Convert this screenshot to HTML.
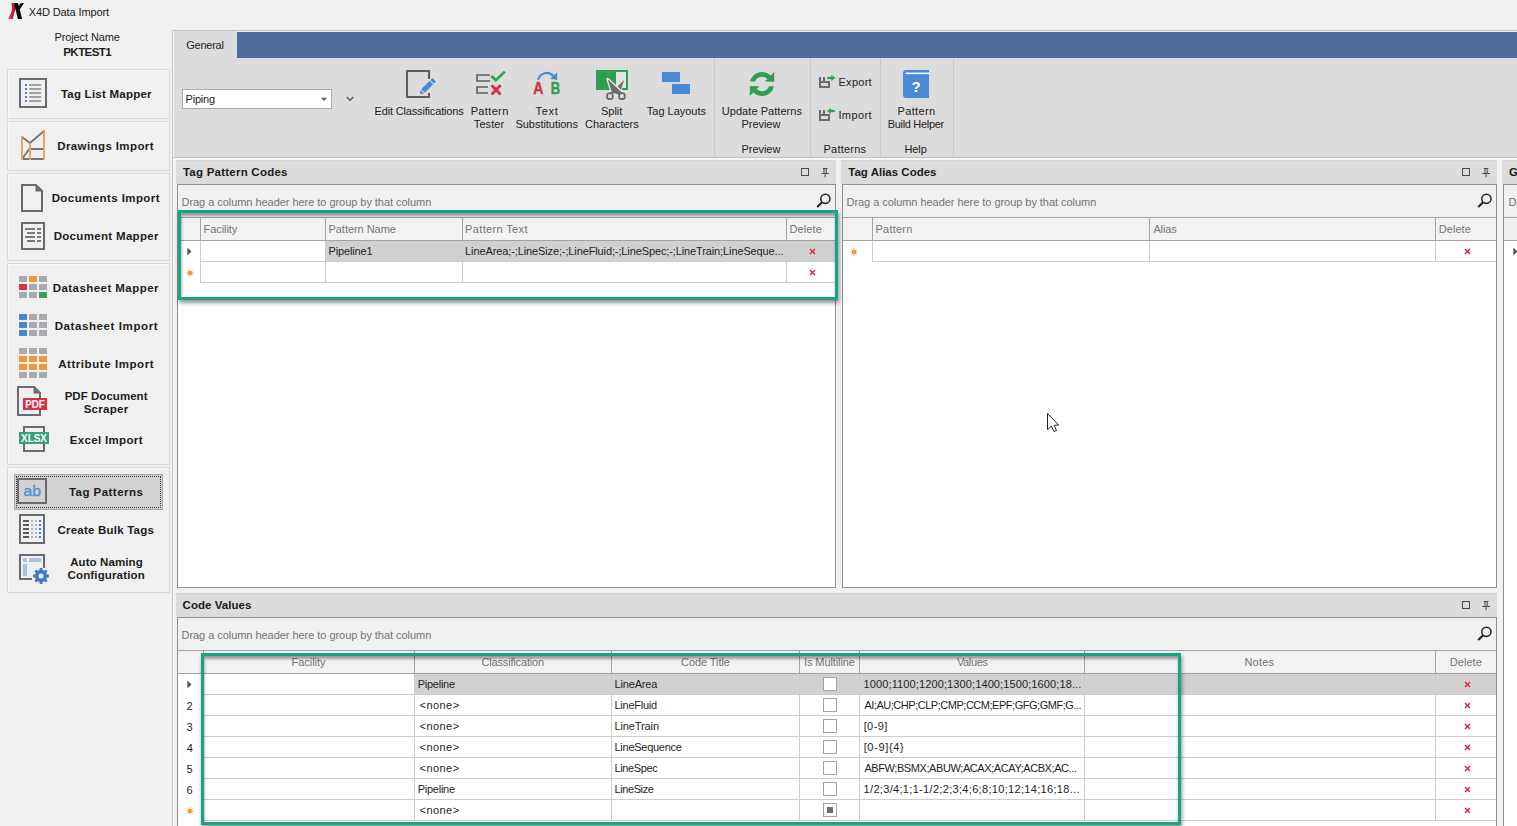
<!DOCTYPE html>
<html><head><meta charset="utf-8"><title>X4D Data Import</title>
<style>
html,body{margin:0;padding:0;}
body{width:1517px;height:826px;overflow:hidden;background:#f0f0f0;position:relative;font-family:"Liberation Sans",sans-serif;font-size:11px;color:#1e1e1e;}
.a{position:absolute;box-sizing:border-box;display:block;}
.t{position:absolute;white-space:nowrap;line-height:14px;height:14px;}
</style></head><body>
<span class="t" style="left:28.75px;top:4.79px;color:#1a1a1a;font-size:11px;letter-spacing:-0.114px;">X4D Data Import</span>
<span class="t" style="left:54.50px;top:30.19px;color:#1e1e1e;font-size:11px;letter-spacing:-0.114px;">Project Name</span>
<span class="t" style="left:63.25px;top:45.02px;color:#1e1e1e;font-size:11.5px;font-weight:bold;letter-spacing:-0.550px;">PKTEST1</span>
<div class="a " style="left:7px;top:69px;width:163px;height:50px;border:1px solid #d8d8d8;box-shadow:inset 1px 1px 0 #f8f8f8;"></div>
<div class="a " style="left:7px;top:121px;width:163px;height:50px;border:1px solid #d8d8d8;box-shadow:inset 1px 1px 0 #f8f8f8;"></div>
<div class="a " style="left:7px;top:173px;width:163px;height:88px;border:1px solid #d8d8d8;box-shadow:inset 1px 1px 0 #f8f8f8;"></div>
<div class="a " style="left:7px;top:263px;width:163px;height:202px;border:1px solid #d8d8d8;box-shadow:inset 1px 1px 0 #f8f8f8;"></div>
<div class="a " style="left:7px;top:467px;width:163px;height:126px;border:1px solid #d8d8d8;box-shadow:inset 1px 1px 0 #f8f8f8;"></div>
<div class="a " style="left:14px;top:474px;width:149px;height:36px;background:#d2d2d2;border:1px solid #a8a8a8;"></div>
<div class="a " style="left:16px;top:476px;width:145px;height:32px;border:1px dotted #3a3a3a;"></div>
<span class="t" style="left:60.90px;top:87.02px;color:#1c1c1c;font-size:11.5px;font-weight:bold;letter-spacing:0.236px;">Tag List Mapper</span>
<span class="t" style="left:57.25px;top:139.02px;color:#1c1c1c;font-size:11.5px;font-weight:bold;letter-spacing:0.396px;">Drawings Import</span>
<span class="t" style="left:51.65px;top:191.02px;color:#1c1c1c;font-size:11.5px;font-weight:bold;letter-spacing:0.420px;">Documents Import</span>
<span class="t" style="left:53.65px;top:229.02px;color:#1c1c1c;font-size:11.5px;font-weight:bold;letter-spacing:0.325px;">Document Mapper</span>
<span class="t" style="left:52.65px;top:281.02px;color:#1c1c1c;font-size:11.5px;font-weight:bold;letter-spacing:0.453px;">Datasheet Mapper</span>
<span class="t" style="left:54.65px;top:319.02px;color:#1c1c1c;font-size:11.5px;font-weight:bold;letter-spacing:0.597px;">Datasheet Import</span>
<span class="t" style="left:58.15px;top:357.02px;color:#1c1c1c;font-size:11.5px;font-weight:bold;letter-spacing:0.567px;">Attribute Import</span>
<span class="t" style="left:64.65px;top:389.02px;color:#1c1c1c;font-size:11.5px;font-weight:bold;letter-spacing:0.041px;">PDF Document</span>
<span class="t" style="left:83.70px;top:402.02px;color:#1c1c1c;font-size:11.5px;font-weight:bold;letter-spacing:0.267px;">Scraper</span>
<span class="t" style="left:69.65px;top:433.02px;color:#1c1c1c;font-size:11.5px;font-weight:bold;letter-spacing:0.350px;">Excel Import</span>
<span class="t" style="left:68.90px;top:485.02px;color:#1c1c1c;font-size:11.5px;font-weight:bold;letter-spacing:0.468px;">Tag Patterns</span>
<span class="t" style="left:57.55px;top:523.02px;color:#1c1c1c;font-size:11.5px;font-weight:bold;letter-spacing:0.213px;">Create Bulk Tags</span>
<span class="t" style="left:70.15px;top:555.02px;color:#1c1c1c;font-size:11.5px;font-weight:bold;letter-spacing:0.100px;">Auto Naming</span>
<span class="t" style="left:67.55px;top:568.02px;color:#1c1c1c;font-size:11.5px;font-weight:bold;letter-spacing:0.146px;">Configuration</span>
<div class="a " style="left:172px;top:30px;width:1px;height:796px;background:#c6c6c6;"></div>
<div class="a " style="left:173px;top:31px;width:1px;height:795px;background:#f6f6f6;"></div>
<div class="a " style="left:172px;top:30px;width:1345px;height:1px;background:#c6c6c6;"></div>
<div class="a " style="left:174px;top:31px;width:1343px;height:126px;background:#dcdcdc;"></div>
<div class="a " style="left:237px;top:32px;width:1280px;height:26px;background:#4d6b9d;"></div>
<div class="a " style="left:237px;top:31px;width:1280px;height:1px;background:#eeeeee;"></div>
<div class="a " style="left:173px;top:157px;width:1344px;height:1px;background:#c2c2c2;"></div>
<div class="a " style="left:173px;top:158px;width:1344px;height:1px;background:#f6f6f6;"></div>
<div class="a " style="left:173px;top:159px;width:1344px;height:1px;background:#f6f6f6;"></div>
<span class="t" style="left:186.25px;top:37.79px;color:#1e1e1e;font-size:11px;letter-spacing:-0.250px;">General</span>
<div class="a " style="left:714px;top:58px;width:1px;height:99px;background:#c9c9c9;"></div>
<div class="a " style="left:810px;top:58px;width:1px;height:99px;background:#c9c9c9;"></div>
<div class="a " style="left:880px;top:58px;width:1px;height:99px;background:#c9c9c9;"></div>
<div class="a " style="left:953px;top:58px;width:1px;height:99px;background:#c9c9c9;"></div>
<div class="a " style="left:182px;top:89px;width:150px;height:20px;background:#ffffff;border:1px solid #ababab;"></div>
<span class="t" style="left:185.50px;top:92.19px;color:#1e1e1e;font-size:11px;letter-spacing:-0.200px;">Piping</span>
<svg class="a" style="left:320px;top:97px;" width="8" height="5" viewBox="0 0 8 5"><path d="M0.8 0.8h6.4l-3.2 3.3z" fill="#626262"/></svg>
<svg class="a" style="left:346px;top:96px;" width="8" height="6" viewBox="0 0 8 6"><path d="M0.7 1l3.3 3.3l3.3-3.3" fill="none" stroke="#555" stroke-width="1.3"/></svg>
<span class="t" style="left:374.50px;top:104.19px;color:#222;font-size:11px;letter-spacing:-0.161px;">Edit Classifications</span>
<span class="t" style="left:470.70px;top:104.19px;color:#222;font-size:11px;letter-spacing:0.350px;">Pattern</span>
<span class="t" style="left:473.80px;top:117.19px;color:#222;font-size:11px;letter-spacing:0.080px;">Tester</span>
<span class="t" style="left:535.40px;top:104.19px;color:#222;font-size:11px;letter-spacing:0.767px;">Text</span>
<span class="t" style="left:515.50px;top:117.19px;color:#222;font-size:11px;letter-spacing:-0.046px;">Substitutions</span>
<span class="t" style="left:601.10px;top:104.19px;color:#222;font-size:11px;letter-spacing:-0.062px;">Split</span>
<span class="t" style="left:585.05px;top:117.19px;color:#222;font-size:11px;letter-spacing:-0.011px;">Characters</span>
<span class="t" style="left:646.80px;top:104.19px;color:#222;font-size:11px;letter-spacing:-0.015px;">Tag Layouts</span>
<span class="t" style="left:721.80px;top:104.19px;color:#222;font-size:11px;letter-spacing:0.046px;">Update Patterns</span>
<span class="t" style="left:741.50px;top:117.19px;color:#222;font-size:11px;letter-spacing:-0.050px;">Preview</span>
<span class="t" style="left:741.50px;top:142.19px;color:#222;font-size:11px;letter-spacing:-0.050px;">Preview</span>
<span class="t" style="left:838.50px;top:75.19px;color:#222;font-size:11px;letter-spacing:0.270px;">Export</span>
<span class="t" style="left:838.40px;top:108.19px;color:#222;font-size:11px;letter-spacing:0.420px;">Import</span>
<span class="t" style="left:823.50px;top:142.19px;color:#222;font-size:11px;letter-spacing:0.214px;">Patterns</span>
<span class="t" style="left:897.50px;top:104.19px;color:#222;font-size:11px;letter-spacing:0.350px;">Pattern</span>
<span class="t" style="left:887.70px;top:117.19px;color:#222;font-size:11px;letter-spacing:-0.314px;">Build Helper</span>
<span class="t" style="left:904.50px;top:142.19px;color:#222;font-size:11px;letter-spacing:-0.100px;">Help</span>
<div class="a " style="left:176px;top:160px;width:660px;height:24px;background:#dcdcdc;border-top:1px solid #d3d3d3;"></div>
<span class="t" style="left:182.90px;top:164.62px;color:#1a1a1a;font-size:11.5px;font-weight:bold;letter-spacing:0.237px;">Tag Pattern Codes</span>
<div class="a " style="left:177px;top:184px;width:659px;height:404px;background:#ffffff;border:1px solid #8f8f8f;"></div>
<div class="a " style="left:178px;top:185px;width:657px;height:32px;background:#f0f0f0;"></div>
<span class="t" style="left:181.50px;top:194.59px;color:#747474;font-size:11px;letter-spacing:-0.045px;">Drag a column header here to group by that column</span>
<svg class="a" style="left:801px;top:168px;" width="8" height="8" viewBox="0 0 8 8"><rect x="0.5" y="0.5" width="7" height="7" fill="none" stroke="#4a4a4a" stroke-width="1"/></svg>
<svg class="a" style="left:821px;top:168px;" width="8" height="10" viewBox="0 0 8 10"><path d="M1.8 0.5h4.6M3 0.5V5M5.2 0.5V5M0.3 5.5h7.6M4.1 5.5v3.8" fill="none" stroke="#4a4a4a" stroke-width="1"/></svg>
<svg class="a" style="left:816px;top:193px;" width="16" height="16" viewBox="0 0 16 16"><circle cx="9.4" cy="5.8" r="4.6" fill="none" stroke="#222" stroke-width="1.5"/><path d="M6.2 9.2L1.2 14" stroke="#222" stroke-width="2.1"/></svg>
<div class="a " style="left:178px;top:217px;width:657px;height:1px;background:#a3a3a3;"></div>
<div class="a " style="left:178px;top:218px;width:657px;height:22px;background:#f2f2f2;"></div>
<div class="a " style="left:178px;top:240px;width:657px;height:1px;background:#a3a3a3;"></div>
<div class="a " style="left:326px;top:241px;width:509px;height:20px;background:#d1d1d1;"></div>
<div class="a " style="left:200px;top:261px;width:635px;height:1px;background:#cdcdcd;"></div>
<div class="a " style="left:200px;top:282px;width:635px;height:1px;background:#cdcdcd;"></div>
<div class="a " style="left:200px;top:218px;width:1px;height:22px;background:#a3a3a3;"></div>
<div class="a " style="left:200px;top:241px;width:1px;height:42px;background:#cdcdcd;"></div>
<div class="a " style="left:325px;top:218px;width:1px;height:22px;background:#a3a3a3;"></div>
<div class="a " style="left:325px;top:241px;width:1px;height:42px;background:#cdcdcd;"></div>
<div class="a " style="left:462px;top:218px;width:1px;height:22px;background:#a3a3a3;"></div>
<div class="a " style="left:462px;top:241px;width:1px;height:42px;background:#cdcdcd;"></div>
<div class="a " style="left:786px;top:218px;width:1px;height:22px;background:#a3a3a3;"></div>
<div class="a " style="left:786px;top:241px;width:1px;height:42px;background:#cdcdcd;"></div>
<span class="t" style="left:203.50px;top:222.19px;color:#757575;font-size:11px;letter-spacing:-0.050px;">Facility</span>
<span class="t" style="left:328.50px;top:222.19px;color:#757575;font-size:11px;letter-spacing:-0.045px;">Pattern Name</span>
<span class="t" style="left:465.10px;top:222.19px;color:#757575;font-size:11px;letter-spacing:0.350px;">Pattern Text</span>
<span class="t" style="left:789.50px;top:222.19px;color:#757575;font-size:11px;letter-spacing:0.110px;">Delete</span>
<span class="t" style="left:328.50px;top:244.19px;color:#1e1e1e;font-size:11px;letter-spacing:-0.156px;">Pipeline1</span>
<span class="t" style="left:465.10px;top:244.19px;color:#1e1e1e;font-size:11px;letter-spacing:-0.116px;">LineArea;-;LineSize;-;LineFluid;-;LineSpec;-;LineTrain;LineSeque...</span>
<svg class="a" style="left:187px;top:247px;" width="5" height="9" viewBox="0 0 5 9"><path d="M0.3 0.5L4.5 4.5L0.3 8.5z" fill="#555"/></svg>
<svg class="a" style="left:185.5px;top:268.5px;" width="8" height="8" viewBox="0 0 8 8"><g stroke="#f0943c" stroke-width="0.9"><path d="M4 0.3V7.7M0.3 4H7.7M1.4 1.4L6.6 6.6M6.6 1.4L1.4 6.6"/></g><circle cx="4" cy="4" r="2" fill="#f0943c"/></svg>
<svg class="a" style="left:808.8px;top:248.0px;" width="7" height="7" viewBox="0 0 7 7"><path d="M1 1L6 6M6 1L1 6" stroke="#d32a41" stroke-width="1.5" fill="none"/></svg>
<svg class="a" style="left:808.8px;top:269.0px;" width="7" height="7" viewBox="0 0 7 7"><path d="M1 1L6 6M6 1L1 6" stroke="#d32a41" stroke-width="1.5" fill="none"/></svg>
<div class="a " style="left:841px;top:160px;width:656px;height:24px;background:#dcdcdc;border-top:1px solid #d3d3d3;"></div>
<span class="t" style="left:848.30px;top:164.62px;color:#1a1a1a;font-size:11.5px;font-weight:bold;">Tag Alias Codes</span>
<div class="a " style="left:842px;top:184px;width:655px;height:404px;background:#ffffff;border:1px solid #8f8f8f;"></div>
<div class="a " style="left:843px;top:185px;width:653px;height:32px;background:#f0f0f0;"></div>
<span class="t" style="left:846.50px;top:194.59px;color:#747474;font-size:11px;letter-spacing:-0.045px;">Drag a column header here to group by that column</span>
<svg class="a" style="left:1462px;top:168px;" width="8" height="8" viewBox="0 0 8 8"><rect x="0.5" y="0.5" width="7" height="7" fill="none" stroke="#4a4a4a" stroke-width="1"/></svg>
<svg class="a" style="left:1482px;top:168px;" width="8" height="10" viewBox="0 0 8 10"><path d="M1.8 0.5h4.6M3 0.5V5M5.2 0.5V5M0.3 5.5h7.6M4.1 5.5v3.8" fill="none" stroke="#4a4a4a" stroke-width="1"/></svg>
<svg class="a" style="left:1477px;top:193px;" width="16" height="16" viewBox="0 0 16 16"><circle cx="9.4" cy="5.8" r="4.6" fill="none" stroke="#222" stroke-width="1.5"/><path d="M6.2 9.2L1.2 14" stroke="#222" stroke-width="2.1"/></svg>
<div class="a " style="left:843px;top:217px;width:653px;height:1px;background:#a3a3a3;"></div>
<div class="a " style="left:843px;top:218px;width:653px;height:22px;background:#f2f2f2;"></div>
<div class="a " style="left:843px;top:240px;width:653px;height:1px;background:#a3a3a3;"></div>
<div class="a " style="left:872px;top:261px;width:624px;height:1px;background:#cdcdcd;"></div>
<div class="a " style="left:872px;top:218px;width:1px;height:22px;background:#a3a3a3;"></div>
<div class="a " style="left:872px;top:241px;width:1px;height:21px;background:#cdcdcd;"></div>
<div class="a " style="left:1149px;top:218px;width:1px;height:22px;background:#a3a3a3;"></div>
<div class="a " style="left:1149px;top:241px;width:1px;height:21px;background:#cdcdcd;"></div>
<div class="a " style="left:1435px;top:218px;width:1px;height:22px;background:#a3a3a3;"></div>
<div class="a " style="left:1435px;top:241px;width:1px;height:21px;background:#cdcdcd;"></div>
<span class="t" style="left:875.50px;top:222.19px;color:#757575;font-size:11px;letter-spacing:0.217px;">Pattern</span>
<span class="t" style="left:1153.40px;top:222.19px;color:#757575;font-size:11px;letter-spacing:-0.125px;">Alias</span>
<span class="t" style="left:1438.70px;top:222.19px;color:#757575;font-size:11px;letter-spacing:0.070px;">Delete</span>
<svg class="a" style="left:850px;top:247.5px;" width="8" height="8" viewBox="0 0 8 8"><g stroke="#f0943c" stroke-width="0.9"><path d="M4 0.3V7.7M0.3 4H7.7M1.4 1.4L6.6 6.6M6.6 1.4L1.4 6.6"/></g><circle cx="4" cy="4" r="2" fill="#f0943c"/></svg>
<svg class="a" style="left:1463.8px;top:248.0px;" width="7" height="7" viewBox="0 0 7 7"><path d="M1 1L6 6M6 1L1 6" stroke="#d32a41" stroke-width="1.5" fill="none"/></svg>
<div class="a " style="left:1502px;top:160px;width:20px;height:24px;background:#dcdcdc;border-top:1px solid #d3d3d3;"></div>
<span class="t" style="left:1509.05px;top:164.62px;color:#1a1a1a;font-size:11.5px;font-weight:bold;">G</span>
<div class="a " style="left:1503px;top:184px;width:20px;height:700px;background:#ffffff;border:1px solid #8f8f8f;"></div>
<div class="a " style="left:1504px;top:185px;width:20px;height:32px;background:#f0f0f0;"></div>
<span class="t" style="left:1508.50px;top:194.59px;color:#747474;font-size:11px;">Dr</span>
<div class="a " style="left:1504px;top:217px;width:13px;height:1px;background:#a3a3a3;"></div>
<div class="a " style="left:1504px;top:218px;width:13px;height:22px;background:#efefef;"></div>
<div class="a " style="left:1504px;top:240px;width:13px;height:1px;background:#a3a3a3;"></div>
<svg class="a" style="left:1513px;top:247px;" width="5" height="9" viewBox="0 0 5 9"><path d="M0.3 0.5L4.5 4.5L0.3 8.5z" fill="#555"/></svg>
<div class="a " style="left:1497px;top:160px;width:5px;height:666px;background:#f3f3f3;"></div>
<div class="a " style="left:176px;top:593px;width:1321px;height:24px;background:#dcdcdc;border-top:1px solid #d3d3d3;"></div>
<span class="t" style="left:182.55px;top:597.62px;color:#1a1a1a;font-size:11.5px;font-weight:bold;letter-spacing:0.050px;">Code Values</span>
<div class="a " style="left:177px;top:617px;width:1320px;height:223px;background:#ffffff;border:1px solid #8f8f8f;"></div>
<div class="a " style="left:178px;top:618px;width:1318px;height:32px;background:#f0f0f0;"></div>
<span class="t" style="left:181.50px;top:627.59px;color:#747474;font-size:11px;letter-spacing:-0.045px;">Drag a column header here to group by that column</span>
<svg class="a" style="left:1462px;top:601px;" width="8" height="8" viewBox="0 0 8 8"><rect x="0.5" y="0.5" width="7" height="7" fill="none" stroke="#4a4a4a" stroke-width="1"/></svg>
<svg class="a" style="left:1482px;top:601px;" width="8" height="10" viewBox="0 0 8 10"><path d="M1.8 0.5h4.6M3 0.5V5M5.2 0.5V5M0.3 5.5h7.6M4.1 5.5v3.8" fill="none" stroke="#4a4a4a" stroke-width="1"/></svg>
<svg class="a" style="left:1477px;top:626px;" width="16" height="16" viewBox="0 0 16 16"><circle cx="9.4" cy="5.8" r="4.6" fill="none" stroke="#222" stroke-width="1.5"/><path d="M6.2 9.2L1.2 14" stroke="#222" stroke-width="2.1"/></svg>
<div class="a " style="left:178px;top:650px;width:1318px;height:1px;background:#a3a3a3;"></div>
<div class="a " style="left:178px;top:651px;width:1318px;height:22px;background:#f2f2f2;"></div>
<div class="a " style="left:178px;top:673px;width:1318px;height:1px;background:#a3a3a3;"></div>
<div class="a " style="left:415px;top:674px;width:1081px;height:20px;background:#d1d1d1;"></div>
<div class="a " style="left:203px;top:694px;width:1293px;height:1px;background:#cdcdcd;"></div>
<div class="a " style="left:203px;top:715px;width:1293px;height:1px;background:#cdcdcd;"></div>
<div class="a " style="left:203px;top:736px;width:1293px;height:1px;background:#cdcdcd;"></div>
<div class="a " style="left:203px;top:757px;width:1293px;height:1px;background:#cdcdcd;"></div>
<div class="a " style="left:203px;top:778px;width:1293px;height:1px;background:#cdcdcd;"></div>
<div class="a " style="left:203px;top:799px;width:1293px;height:1px;background:#cdcdcd;"></div>
<div class="a " style="left:203px;top:820px;width:1293px;height:1px;background:#cdcdcd;"></div>
<div class="a " style="left:203px;top:651px;width:1px;height:22px;background:#a3a3a3;"></div>
<div class="a " style="left:203px;top:674px;width:1px;height:147px;background:#cdcdcd;"></div>
<div class="a " style="left:414px;top:651px;width:1px;height:22px;background:#a3a3a3;"></div>
<div class="a " style="left:414px;top:674px;width:1px;height:147px;background:#cdcdcd;"></div>
<div class="a " style="left:611px;top:651px;width:1px;height:22px;background:#a3a3a3;"></div>
<div class="a " style="left:611px;top:674px;width:1px;height:147px;background:#cdcdcd;"></div>
<div class="a " style="left:799px;top:651px;width:1px;height:22px;background:#a3a3a3;"></div>
<div class="a " style="left:799px;top:674px;width:1px;height:147px;background:#cdcdcd;"></div>
<div class="a " style="left:859px;top:651px;width:1px;height:22px;background:#a3a3a3;"></div>
<div class="a " style="left:859px;top:674px;width:1px;height:147px;background:#cdcdcd;"></div>
<div class="a " style="left:1084px;top:651px;width:1px;height:22px;background:#a3a3a3;"></div>
<div class="a " style="left:1084px;top:674px;width:1px;height:147px;background:#cdcdcd;"></div>
<div class="a " style="left:1435px;top:651px;width:1px;height:22px;background:#a3a3a3;"></div>
<div class="a " style="left:1435px;top:674px;width:1px;height:147px;background:#cdcdcd;"></div>
<span class="t" style="left:291.50px;top:655.19px;color:#757575;font-size:11px;letter-spacing:-0.021px;">Facility</span>
<span class="t" style="left:481.45px;top:655.19px;color:#757575;font-size:11px;letter-spacing:-0.162px;">Classification</span>
<span class="t" style="left:681.05px;top:655.19px;color:#757575;font-size:11px;letter-spacing:-0.078px;">Code Title</span>
<span class="t" style="left:804.00px;top:655.19px;color:#757575;font-size:11px;letter-spacing:-0.100px;">Is Multiline</span>
<span class="t" style="left:956.95px;top:655.19px;color:#757575;font-size:11px;letter-spacing:-0.360px;">Values</span>
<span class="t" style="left:1244.50px;top:655.19px;color:#757575;font-size:11px;letter-spacing:0.175px;">Notes</span>
<span class="t" style="left:1449.70px;top:655.19px;color:#757575;font-size:11px;letter-spacing:0.070px;">Delete</span>
<span class="t" style="left:417.70px;top:677.19px;color:#1e1e1e;font-size:11px;letter-spacing:-0.250px;">Pipeline</span>
<span class="t" style="left:614.50px;top:677.19px;color:#1e1e1e;font-size:11px;letter-spacing:-0.164px;">LineArea</span>
<span class="t" style="left:863.60px;top:677.19px;color:#1e1e1e;font-size:11px;letter-spacing:0.114px;">1000;1100;1200;1300;1400;1500;1600;18...</span>
<div class="a " style="left:823px;top:677px;width:14px;height:14px;background:#ffffff;border:1px solid #a4a4a4;"></div>
<svg class="a" style="left:1463.8px;top:681.0px;" width="7" height="7" viewBox="0 0 7 7"><path d="M1 1L6 6M6 1L1 6" stroke="#d32a41" stroke-width="1.5" fill="none"/></svg>
<span class="t" style="left:419.50px;top:698.19px;color:#1e1e1e;font-size:11px;letter-spacing:0.460px;">&lt;none&gt;</span>
<span class="t" style="left:614.50px;top:698.19px;color:#1e1e1e;font-size:11px;letter-spacing:-0.256px;">LineFluid</span>
<span class="t" style="left:864.40px;top:698.19px;color:#1e1e1e;font-size:11px;letter-spacing:-0.474px;">AI;AU;CHP;CLP;CMP;CCM;EPF;GFG;GMF;G...</span>
<div class="a " style="left:823px;top:698px;width:14px;height:14px;background:#ffffff;border:1px solid #a4a4a4;"></div>
<svg class="a" style="left:1463.8px;top:702.0px;" width="7" height="7" viewBox="0 0 7 7"><path d="M1 1L6 6M6 1L1 6" stroke="#d32a41" stroke-width="1.5" fill="none"/></svg>
<span class="t" style="left:186.45px;top:698.99px;color:#222;font-size:11px;">2</span>
<span class="t" style="left:419.50px;top:719.19px;color:#1e1e1e;font-size:11px;letter-spacing:0.460px;">&lt;none&gt;</span>
<span class="t" style="left:614.50px;top:719.19px;color:#1e1e1e;font-size:11px;letter-spacing:-0.112px;">LineTrain</span>
<span class="t" style="left:863.65px;top:719.19px;color:#1e1e1e;font-size:11px;letter-spacing:0.425px;">[0-9]</span>
<div class="a " style="left:823px;top:719px;width:14px;height:14px;background:#ffffff;border:1px solid #a4a4a4;"></div>
<svg class="a" style="left:1463.8px;top:723.0px;" width="7" height="7" viewBox="0 0 7 7"><path d="M1 1L6 6M6 1L1 6" stroke="#d32a41" stroke-width="1.5" fill="none"/></svg>
<span class="t" style="left:186.60px;top:719.99px;color:#222;font-size:11px;">3</span>
<span class="t" style="left:419.50px;top:740.19px;color:#1e1e1e;font-size:11px;letter-spacing:0.460px;">&lt;none&gt;</span>
<span class="t" style="left:614.50px;top:740.19px;color:#1e1e1e;font-size:11px;letter-spacing:-0.268px;">LineSequence</span>
<span class="t" style="left:863.65px;top:740.19px;color:#1e1e1e;font-size:11px;letter-spacing:0.664px;">[0-9]{4}</span>
<div class="a " style="left:823px;top:740px;width:14px;height:14px;background:#ffffff;border:1px solid #a4a4a4;"></div>
<svg class="a" style="left:1463.8px;top:744.0px;" width="7" height="7" viewBox="0 0 7 7"><path d="M1 1L6 6M6 1L1 6" stroke="#d32a41" stroke-width="1.5" fill="none"/></svg>
<span class="t" style="left:186.75px;top:740.99px;color:#222;font-size:11px;">4</span>
<span class="t" style="left:419.50px;top:761.19px;color:#1e1e1e;font-size:11px;letter-spacing:0.460px;">&lt;none&gt;</span>
<span class="t" style="left:614.50px;top:761.19px;color:#1e1e1e;font-size:11px;letter-spacing:-0.357px;">LineSpec</span>
<span class="t" style="left:864.40px;top:761.19px;color:#1e1e1e;font-size:11px;letter-spacing:-0.415px;">ABFW;BSMX;ABUW;ACAX;ACAY;ACBX;AC...</span>
<div class="a " style="left:823px;top:761px;width:14px;height:14px;background:#ffffff;border:1px solid #a4a4a4;"></div>
<svg class="a" style="left:1463.8px;top:765.0px;" width="7" height="7" viewBox="0 0 7 7"><path d="M1 1L6 6M6 1L1 6" stroke="#d32a41" stroke-width="1.5" fill="none"/></svg>
<span class="t" style="left:186.60px;top:761.99px;color:#222;font-size:11px;">5</span>
<span class="t" style="left:417.70px;top:782.19px;color:#1e1e1e;font-size:11px;letter-spacing:-0.250px;">Pipeline</span>
<span class="t" style="left:614.50px;top:782.19px;color:#1e1e1e;font-size:11px;letter-spacing:-0.407px;">LineSize</span>
<span class="t" style="left:863.60px;top:782.19px;color:#1e1e1e;font-size:11px;letter-spacing:0.321px;">1/2;3/4;1;1-1/2;2;3;4;6;8;10;12;14;16;18...</span>
<div class="a " style="left:823px;top:782px;width:14px;height:14px;background:#ffffff;border:1px solid #a4a4a4;"></div>
<svg class="a" style="left:1463.8px;top:786.0px;" width="7" height="7" viewBox="0 0 7 7"><path d="M1 1L6 6M6 1L1 6" stroke="#d32a41" stroke-width="1.5" fill="none"/></svg>
<span class="t" style="left:186.45px;top:782.99px;color:#222;font-size:11px;">6</span>
<span class="t" style="left:419.50px;top:803.19px;color:#1e1e1e;font-size:11px;letter-spacing:0.460px;">&lt;none&gt;</span>
<div class="a " style="left:823px;top:803px;width:14px;height:14px;background:#ffffff;border:1px solid #a4a4a4;"></div>
<div class="a " style="left:827px;top:807px;width:6px;height:6px;background:#6e6e6e;"></div>
<svg class="a" style="left:1463.8px;top:807.0px;" width="7" height="7" viewBox="0 0 7 7"><path d="M1 1L6 6M6 1L1 6" stroke="#d32a41" stroke-width="1.5" fill="none"/></svg>
<svg class="a" style="left:187px;top:680px;" width="5" height="9" viewBox="0 0 5 9"><path d="M0.3 0.5L4.5 4.5L0.3 8.5z" fill="#555"/></svg>
<svg class="a" style="left:185.5px;top:806.5px;" width="8" height="8" viewBox="0 0 8 8"><g stroke="#f0943c" stroke-width="0.9"><path d="M4 0.3V7.7M0.3 4H7.7M1.4 1.4L6.6 6.6M6.6 1.4L1.4 6.6"/></g><circle cx="4" cy="4" r="2" fill="#f0943c"/></svg>
<svg class="a" style="left:7px;top:2px;" width="18" height="18" viewBox="0 0 18 18"><defs><linearGradient id="xr" x1="0" y1="0" x2="1" y2="0"><stop offset="0" stop-color="#e0607a"/><stop offset="0.5" stop-color="#c8203c"/><stop offset="1" stop-color="#8a1024"/></linearGradient></defs>
<path d="M4.2 1.2L8.6 1.2C9.2 4 9 7 7.6 9.8L5.8 17L1 17L4.6 9.6C5.4 7 5.2 4 4.2 1.2z" fill="url(#xr)"/>
<path d="M7 1L11 1L15.2 17L10.8 17z" fill="#0a0a0a"/>
<path d="M13.6 1L17 1L11.4 9.4L10 6.4z" fill="#0a0a0a"/></svg>
<svg class="a" style="left:19px;top:78px;" width="28" height="30" viewBox="0 0 28 30"><rect x="1" y="1" width="26" height="28" fill="none" stroke="#6a6a6f" stroke-width="2"/><rect x="6" y="6" width="2" height="2" fill="#4a80c4"/><rect x="10" y="6" width="12" height="2" fill="#a2a2a6"/><rect x="6" y="10" width="2" height="2" fill="#4a80c4"/><rect x="10" y="10" width="12" height="2" fill="#a2a2a6"/><rect x="6" y="14" width="2" height="2" fill="#4a80c4"/><rect x="10" y="14" width="12" height="2" fill="#a2a2a6"/><rect x="6" y="18" width="2" height="2" fill="#4a80c4"/><rect x="10" y="18" width="12" height="2" fill="#a2a2a6"/><rect x="6" y="22" width="2" height="2" fill="#4a80c4"/><rect x="10" y="22" width="12" height="2" fill="#a2a2a6"/></svg>
<svg class="a" style="left:21px;top:130px;" width="24" height="30" viewBox="0 0 24 30"><g fill="none" stroke="#77777b" stroke-width="2"><path d="M1 7L9 13L23 1M9 18L1 29M9 19H23M1 29H23"/></g>
<g fill="none" stroke="#e8a466" stroke-width="2"><path d="M1 6V30M9 13V30M23 0V30"/></g></svg>
<svg class="a" style="left:21px;top:184px;" width="22" height="28" viewBox="0 0 22 28"><path d="M1 1H15L21 7V27H1z" fill="none" stroke="#6a6a6f" stroke-width="2"/><path d="M14.5 1.5V7.5H20.8z" fill="#6a6a6f"/></svg>
<svg class="a" style="left:21px;top:222px;" width="24" height="28" viewBox="0 0 24 28"><rect x="1" y="1" width="22" height="26" fill="none" stroke="#6a6a6f" stroke-width="2"/><rect x="4" y="6" width="10" height="2" fill="#7a7a7e"/><rect x="16" y="6" width="4" height="2" fill="#7a7a7e"/><rect x="6" y="10" width="8" height="2" fill="#7a7a7e"/><rect x="16" y="10" width="4" height="2" fill="#7a7a7e"/><rect x="4" y="14" width="10" height="2" fill="#7a7a7e"/><rect x="16" y="14" width="4" height="2" fill="#7a7a7e"/><rect x="6" y="18" width="8" height="2" fill="#7a7a7e"/><rect x="16" y="18" width="4" height="2" fill="#7a7a7e"/></svg>
<svg class="a" style="left:19px;top:276px;" width="28" height="22" viewBox="0 0 28 22"><rect x="0" y="0" width="8" height="6" fill="#a9a9ae"/><rect x="10" y="0" width="8" height="6" fill="#f0993c"/><rect x="20" y="0" width="8" height="6" fill="#a9a9ae"/><rect x="0" y="8" width="8" height="6" fill="#d8304a"/><rect x="10" y="8" width="8" height="6" fill="#a9a9ae"/><rect x="20" y="8" width="8" height="6" fill="#a9a9ae"/><rect x="0" y="16" width="8" height="6" fill="#a9a9ae"/><rect x="10" y="16" width="8" height="6" fill="#a9a9ae"/><rect x="20" y="16" width="8" height="6" fill="#3aa356"/></svg>
<svg class="a" style="left:19px;top:314px;" width="28" height="22" viewBox="0 0 28 22"><rect x="0" y="0" width="8" height="6" fill="#4685d0"/><rect x="10" y="0" width="8" height="6" fill="#a9a9ae"/><rect x="20" y="0" width="8" height="6" fill="#a9a9ae"/><rect x="0" y="8" width="8" height="6" fill="#4685d0"/><rect x="10" y="8" width="8" height="6" fill="#a9a9ae"/><rect x="20" y="8" width="8" height="6" fill="#a9a9ae"/><rect x="0" y="16" width="8" height="6" fill="#4685d0"/><rect x="10" y="16" width="8" height="6" fill="#a9a9ae"/><rect x="20" y="16" width="8" height="6" fill="#a9a9ae"/></svg>
<svg class="a" style="left:19px;top:348px;" width="28" height="30" viewBox="0 0 28 30"><rect x="0" y="0" width="8" height="6" fill="#a9a9ae"/><rect x="10" y="0" width="8" height="6" fill="#a9a9ae"/><rect x="20" y="0" width="8" height="6" fill="#a9a9ae"/><rect x="0" y="8" width="8" height="6" fill="#f0993c"/><rect x="10" y="8" width="8" height="6" fill="#f0993c"/><rect x="20" y="8" width="8" height="6" fill="#f0993c"/><rect x="0" y="16" width="8" height="6" fill="#f0993c"/><rect x="10" y="16" width="8" height="6" fill="#f0993c"/><rect x="20" y="16" width="8" height="6" fill="#f0993c"/><rect x="0" y="24" width="8" height="6" fill="#a9a9ae"/><rect x="10" y="24" width="8" height="6" fill="#a9a9ae"/><rect x="20" y="24" width="8" height="6" fill="#a9a9ae"/></svg>
<svg class="a" style="left:17px;top:386px;" width="30" height="30" viewBox="0 0 30 30"><path d="M1 1H17L23 7V29H1z" fill="none" stroke="#6a6a6f" stroke-width="2"/><path d="M16.5 1.5V7.5H22.8z" fill="#6a6a6f"/>
<rect x="6" y="12" width="24" height="12" fill="#d8304a"/>
<text x="18" y="22.1" font-family="Liberation Sans, sans-serif" font-weight="bold" font-size="11.4" fill="#fff" text-anchor="middle" textLength="19.5" lengthAdjust="spacingAndGlyphs">PDF</text></svg>
<svg class="a" style="left:19px;top:426px;" width="30" height="26" viewBox="0 0 30 26"><rect x="5" y="1" width="20" height="24" fill="none" stroke="#6a6a6f" stroke-width="2"/>
<rect x="0" y="6" width="30" height="12" fill="#3a9f7a"/>
<text x="15" y="16" font-family="Liberation Sans, sans-serif" font-weight="bold" font-size="11" fill="#fff" text-anchor="middle" textLength="26" lengthAdjust="spacingAndGlyphs">XLSX</text></svg>
<svg class="a" style="left:17px;top:478px;" width="30" height="26" viewBox="0 0 30 26"><rect x="1" y="1" width="28" height="24" fill="none" stroke="#6a6a6f" stroke-width="2"/>
<text x="15.3" y="17.6" font-family="Liberation Sans, sans-serif" font-size="15.5" fill="#5b90d2" stroke="#5b90d2" stroke-width="0.45" text-anchor="middle" textLength="17.5" lengthAdjust="spacingAndGlyphs">ab</text></svg>
<svg class="a" style="left:19px;top:514px;" width="26" height="30" viewBox="0 0 26 30"><rect x="1" y="1" width="24" height="28" fill="none" stroke="#6a6a6f" stroke-width="2"/><rect x="4" y="6" width="6" height="2" fill="#5a5a5e"/><rect x="12" y="6" width="2" height="2" fill="#b4b0aa"/><rect x="16" y="6" width="2" height="2" fill="#9bb8de"/><rect x="20" y="6" width="2" height="2" fill="#4a80c4"/><rect x="4" y="10" width="6" height="2" fill="#5a5a5e"/><rect x="12" y="10" width="2" height="2" fill="#b4b0aa"/><rect x="16" y="10" width="2" height="2" fill="#9bb8de"/><rect x="20" y="10" width="2" height="2" fill="#4a80c4"/><rect x="4" y="14" width="6" height="2" fill="#5a5a5e"/><rect x="12" y="14" width="2" height="2" fill="#b4b0aa"/><rect x="16" y="14" width="2" height="2" fill="#9bb8de"/><rect x="20" y="14" width="2" height="2" fill="#4a80c4"/><rect x="4" y="18" width="6" height="2" fill="#5a5a5e"/><rect x="12" y="18" width="2" height="2" fill="#b4b0aa"/><rect x="16" y="18" width="2" height="2" fill="#9bb8de"/><rect x="20" y="18" width="2" height="2" fill="#4a80c4"/><rect x="4" y="22" width="6" height="2" fill="#5a5a5e"/><rect x="12" y="22" width="2" height="2" fill="#b4b0aa"/><rect x="16" y="22" width="2" height="2" fill="#9bb8de"/><rect x="20" y="22" width="2" height="2" fill="#4a80c4"/></svg>
<svg class="a" style="left:19px;top:554px;" width="31" height="31" viewBox="0 0 31 31"><path d="M25 14V1H1V25H13" fill="none" stroke="#6a6a6f" stroke-width="2"/>
<rect x="4" y="4" width="4" height="4" fill="#a9c1e3"/><rect x="10" y="4" width="12" height="4" fill="#a9c1e3"/><rect x="4" y="10" width="4" height="12" fill="#a9c1e3"/>
<polygon points="29.88,20.62 29.88,23.38 28.03,23.45 27.29,25.24 28.55,26.60 26.60,28.55 25.24,27.29 23.45,28.03 23.38,29.88 20.62,29.88 20.55,28.03 18.76,27.29 17.40,28.55 15.45,26.60 16.71,25.24 15.97,23.45 14.12,23.38 14.12,20.62 15.97,20.55 16.71,18.76 15.45,17.40 17.40,15.45 18.76,16.71 20.55,15.97 20.62,14.12 23.38,14.12 23.45,15.97 25.24,16.71 26.60,15.45 28.55,17.40 27.29,18.76 28.03,20.55" fill="#3f7cc8"/><circle cx="22" cy="22" r="2.5" fill="#f0f0f0"/></svg>
<svg class="a" style="left:406px;top:70px;" width="32" height="28" viewBox="0 0 32 28"><path d="M23 9V1H1V27H23V23" fill="none" stroke="#5c5c60" stroke-width="2"/>
<g transform="translate(14,24) rotate(-45)"><path d="M0 0L3.2 -2.5V2.5z" fill="#4a8ad4"/><rect x="4.2" y="-2.5" width="12" height="5" fill="#4a8ad4"/><rect x="17.2" y="-2.5" width="2.8" height="5" fill="#4a8ad4"/></g></svg>
<svg class="a" style="left:476px;top:70px;" width="30" height="27" viewBox="0 0 30 27"><path d="M14 5H1V11H14M12 17H1V23H12" fill="none" stroke="#5c5c60" stroke-width="1.6"/>
<path d="M15.4 6L19.8 10.2L28.8 1.6" fill="none" stroke="#2f9e4f" stroke-width="2.6"/>
<path d="M15.6 15.2L24.6 24.4M24.6 15.2L15.6 24.4" fill="none" stroke="#d42f46" stroke-width="2.8"/></svg>
<svg class="a" style="left:532px;top:70px;" width="30" height="26" viewBox="0 0 30 26"><text x="1.2" y="24" font-family="Liberation Sans, sans-serif" font-weight="bold" font-size="16.8" fill="#d42f46" stroke="#d42f46" stroke-width="0.4" textLength="10.2" lengthAdjust="spacingAndGlyphs">A</text>
<text x="18.8" y="24" font-family="Liberation Sans, sans-serif" font-weight="bold" font-size="16.8" fill="#2f9e4f" stroke="#2f9e4f" stroke-width="0.4" textLength="9.4" lengthAdjust="spacingAndGlyphs">B</text>
<path d="M6 9.8C8 2.6 17 0.6 21.6 6.2" fill="none" stroke="#4a8ad4" stroke-width="2.2"/>
<path d="M25.2 2.2V10L18.2 8.8z" fill="#4a8ad4"/></svg>
<svg class="a" style="left:596px;top:70px;" width="32" height="31" viewBox="0 0 32 31"><rect x="0" y="0" width="32" height="20" fill="#2f9e4f"/><rect x="20" y="2" width="10" height="16" fill="#e4e4e6"/>
<path d="M28.2 9.8L20.6 17.6L24.8 20z" fill="#6a6a6f" stroke="#e2ece4" stroke-width="1.6" paint-order="stroke"/>
<path d="M11.6 9L26.2 22.8L23.4 25L16 22.6z" fill="#6a6a6f" stroke="#e4f0e6" stroke-width="2.6" stroke-linejoin="round" paint-order="stroke"/>
<path d="M17.4 21.6L15.4 24" stroke="#6a6a6f" stroke-width="2.4"/>
<circle cx="13.9" cy="26.2" r="3" fill="none" stroke="#6a6a6f" stroke-width="1.8"/><circle cx="26" cy="26.2" r="3" fill="none" stroke="#6a6a6f" stroke-width="1.8"/></svg>
<div class="a " style="left:662px;top:72px;width:18px;height:10px;background:#4a8ad4;"></div>
<div class="a " style="left:672px;top:84px;width:18px;height:10px;background:#4a8ad4;"></div>
<svg class="a" style="left:749px;top:71px;" width="26" height="26" viewBox="0 0 26 26"><defs><clipPath id="rt"><rect x="0" y="0" width="26" height="10.6"/></clipPath><clipPath id="rb"><rect x="0" y="15.2" width="26" height="11"/></clipPath></defs>
<circle cx="13" cy="13" r="9.7" fill="none" stroke="#2f9e4f" stroke-width="4.8" clip-path="url(#rt)"/>
<circle cx="13" cy="13" r="9.7" fill="none" stroke="#2f9e4f" stroke-width="4.8" clip-path="url(#rb)"/>
<path d="M25.2 1V10.6H15.8z" fill="#2f9e4f"/><path d="M0.8 25V15.2H10.4z" fill="#2f9e4f"/></svg>
<svg class="a" style="left:819px;top:75px;" width="17" height="14" viewBox="0 -2 17 14"><path d="M1 0V10H10V5H1" fill="none" stroke="#6a6a6f" stroke-width="2"/><rect x="4" y="0" width="2" height="4" fill="#6a6a6f"/><rect x="8.2" y="-0.1" width="5" height="2.2" fill="#2f9e4f"/><path d="M12.3 -2L16.4 1L12.3 4z" fill="#2f9e4f"/></svg>
<svg class="a" style="left:819px;top:108px;" width="17" height="14" viewBox="0 -2 17 14"><path d="M1 0V10H10V5H1" fill="none" stroke="#6a6a6f" stroke-width="2"/><rect x="4" y="0" width="2" height="4" fill="#6a6a6f"/><rect x="11" y="-0.1" width="4.8" height="2.2" fill="#2f9e4f"/><path d="M11.9 -2L7.8 1L11.9 4z" fill="#2f9e4f"/></svg>
<svg class="a" style="left:903px;top:70px;" width="26" height="28" viewBox="0 0 26 28"><path d="M3 0H26V28H3A3 3 0 0 1 0 25V3A3 3 0 0 1 3 0z" fill="#4a8ad4"/><rect x="2.6" y="2.6" width="23.4" height="1.5" fill="#fff"/>
<text x="13" y="22.2" font-family="Liberation Sans, sans-serif" font-weight="bold" font-size="15" fill="#fff" text-anchor="middle">?</text></svg>
<div class="a " style="left:178px;top:210px;width:660px;height:90px;border:3px solid #16a583;box-shadow:0.5px 3px 4px rgba(0,0,0,0.42), inset 0.5px 3px 3px rgba(0,0,0,0.36);"></div>
<div class="a " style="left:201px;top:653px;width:980px;height:172px;border:3px solid #16a583;box-shadow:0.5px 3px 4px rgba(0,0,0,0.42), inset 0.5px 3px 3px rgba(0,0,0,0.36);"></div>
<svg class="a" style="left:1046px;top:412px;" width="14" height="21" viewBox="0 0 14 21"><path d="M1.5 1.5V17.5L5.3 14.2L8 19.5L10.5 18.5L8.2 13.3L12.7 13z" fill="#fff" stroke="#222" stroke-width="1" stroke-linejoin="miter"/></svg>
</body></html>
